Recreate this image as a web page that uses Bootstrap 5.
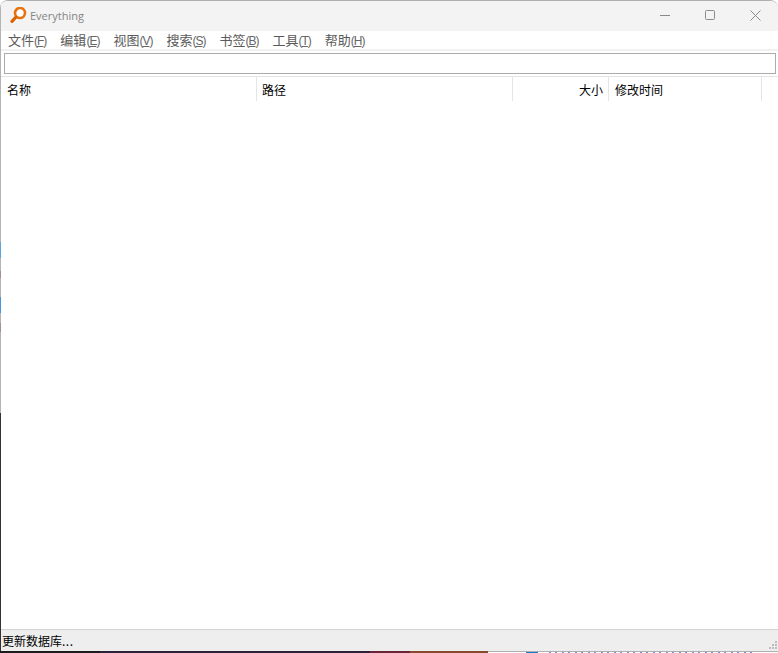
<!DOCTYPE html>
<html lang="zh">
<head>
<meta charset="utf-8">
<title>Everything</title>
<link href="https://cdn.jsdelivr.net/npm/bootstrap@5.3.0/dist/css/bootstrap.min.css" rel="stylesheet">
<style>
html,body{height:653px;overflow:hidden}
body{background:#fff;font-family:"Noto Sans CJK SC","Liberation Sans",sans-serif;font-size:12px;line-height:1;color:#000}
.shell{height:653px;width:778px;background:#fff}
.win{height:651px;width:778px;padding-left:1px;border-top:1px solid #b0b0b0;border-top-left-radius:8px;border-top-right-radius:8px;overflow:hidden;background:linear-gradient(to bottom,#b4b4b4 0 241px,#5aa5d8 241px 257px,#b4b4b4 257px 270px,#a98a96 270px 277px,#b4b4b4 277px 296px,#4a95d8 296px 312px,#b4b4b4 312px 322px,#a68f8f 322px 331px,#b4b4b4 331px 412px,#333 412px 651px) left top/1px 100% no-repeat #fff}
.titlebar{height:30px;background:#f3f3f3}
.apptitle{font-family:"Open Sans","Liberation Sans",sans-serif;font-size:11px;color:#858585;margin-left:3px;margin-top:-2px}
.logo{margin-left:9px;width:17px;height:17px;margin-top:-2px}
.winbtns{gap:34px;padding-right:17px;margin-top:-1px}
.winbtns svg{display:block}
.menubar{height:18px;gap:14px;padding-left:7px;color:#5a5a5a;font-size:13px;background:#fff}
.mk{font-family:"Liberation Sans",sans-serif;font-size:12px;letter-spacing:-1px;color:#666}
.mk u{text-underline-offset:1px}
.menugap{height:2px;background:#f1f1f1}
.searchwrap{padding:2px 2px 0 3px;height:25px;background:#fff}
.searchbox{height:21px;border:1px solid #ababab;background:#fff;width:100%;display:block;outline:0;border-radius:0}
.hdr{height:26px;border-top:1px solid #e3e3e3;background:#fff}
.hcell{height:24px;border-right:1px solid #e5e5e5;display:flex;align-items:center;padding-left:6px;padding-top:1px}
.c1{width:256px}.c2{width:256px;padding-left:5px}.c3{width:96px;padding-right:5px;justify-content:flex-end}.c4{width:153px}
.listarea{min-height:0;background:#fff}
.statusbar{height:22px;background:#eee;border-top:1px solid #d3d3d3;padding-left:1px;padding-top:2px;padding-bottom:1px;position:relative}
.grip{position:absolute;right:0;bottom:1px;width:9px;height:9px}
.dots{letter-spacing:.5px}
.desk{height:2px;overflow:hidden;background:#fff}
.dk1{width:100px;background:#1c1c20}
.dk2{width:270px;background:#2e2238}
.dk3{width:40px;background:#6a2438}
.dk4{width:78px;background:#8a4a30}
.dkright{border-top:1px solid #b0b0b0}
.dk5{width:38px}
.dk6{width:12px;background:#1f78c4}
.dk7{margin-left:11px;width:206px;background:repeating-linear-gradient(to right,#7f8fd8 0 2px,#fff 2px 6px,#7f8fd8 6px 8px,#fff 8px 13px)}
</style>
</head>
<body>
<div class="shell d-flex flex-column">
  <div class="win d-flex flex-column">
    <div class="titlebar d-flex align-items-center flex-shrink-0">
      <svg class="logo" viewBox="0 0 17 17" aria-hidden="true"><circle cx="10" cy="6" r="5" fill="#fff" stroke="#e8720c" stroke-width="2.6"/><path d="M5.8 10.2 2 14.4" stroke="#d96500" stroke-width="3.2" stroke-linecap="round"/></svg>
      <span class="apptitle flex-grow-1">Everything</span>
      <div class="winbtns d-flex align-items-center flex-shrink-0">
        <svg width="11" height="11" viewBox="0 0 11 11"><path d="M0 5.5h10" stroke="#8a8a8a" fill="none"/></svg>
        <svg width="11" height="11" viewBox="0 0 11 11"><rect x=".5" y=".5" width="9" height="9" rx="1" stroke="#8a8a8a" fill="none"/></svg>
        <svg width="11" height="11" viewBox="0 0 11 11"><path d="M.5.5l10 10M10.5.5l-10 10" stroke="#8a8a8a" fill="none"/></svg>
      </div>
    </div>
    <div class="menubar d-flex align-items-center flex-shrink-0">
      <span>文件<span class="mk">(<u>F</u>)</span></span><span>编辑<span class="mk">(<u>E</u>)</span></span><span>视图<span class="mk">(<u>V</u>)</span></span><span>搜索<span class="mk">(<u>S</u>)</span></span><span>书签<span class="mk">(<u>B</u>)</span></span><span>工具<span class="mk">(<u>T</u>)</span></span><span>帮助<span class="mk">(<u>H</u>)</span></span>
    </div>
    <div class="menugap flex-shrink-0"></div>
    <div class="searchwrap flex-shrink-0"><input class="searchbox" type="text" aria-label="搜索"></div>
    <div class="hdr d-flex flex-shrink-0">
      <div class="hcell c1">名称</div>
      <div class="hcell c2">路径</div>
      <div class="hcell c3">大小</div>
      <div class="hcell c4">修改时间</div>
    </div>
    <div class="listarea flex-grow-1"></div>
    <div class="statusbar d-flex align-items-center flex-shrink-0"><span>更新数据库<span class="dots">...</span></span>
      <svg class="grip" viewBox="0 0 9 9" aria-hidden="true"><g fill="#bdbdbd"><rect x="6" y="0" width="2" height="2"/><rect x="3" y="3" width="2" height="2"/><rect x="6" y="3" width="2" height="2"/><rect x="0" y="6" width="2" height="2"/><rect x="3" y="6" width="2" height="2"/><rect x="6" y="6" width="2" height="2"/></g></svg>
    </div>
  </div>
  <div class="desk d-flex flex-shrink-0">
    <div class="dk1"></div>
    <div class="dk2"></div>
    <div class="dk3"></div>
    <div class="dk4"></div>
    <div class="dkright d-flex flex-grow-1">
      <div class="dk5"></div>
      <div class="dk6"></div>
      <div class="dk7"></div>
    </div>
  </div>
</div>
<script src="https://cdn.jsdelivr.net/npm/bootstrap@5.3.0/dist/js/bootstrap.bundle.min.js"></script>
</body>
</html>
